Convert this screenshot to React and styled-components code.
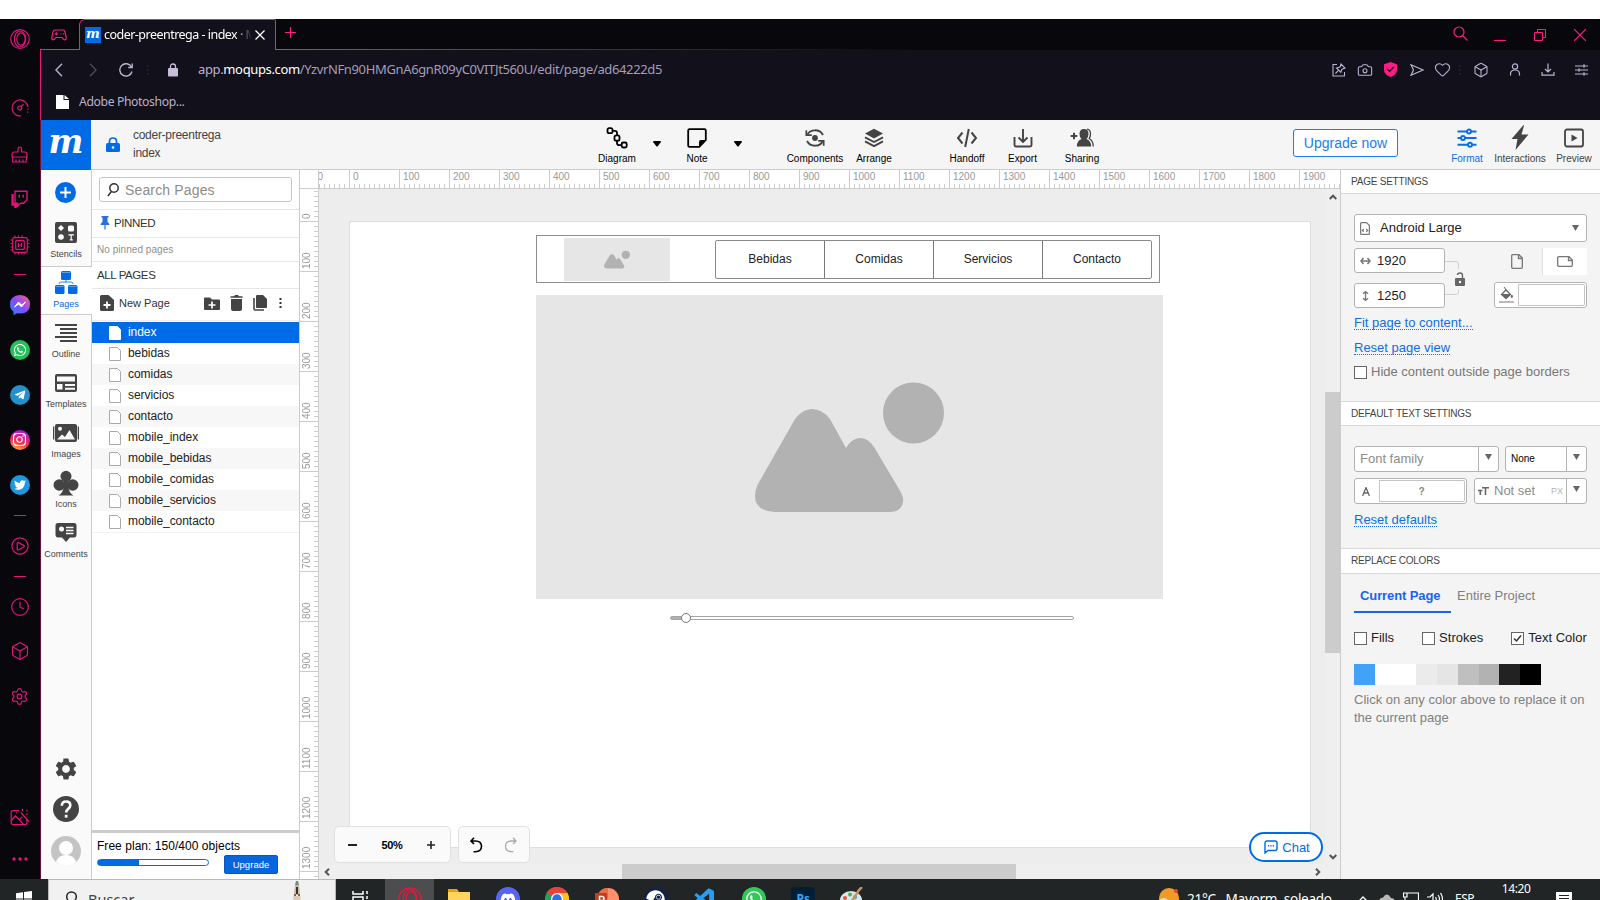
import React from 'react';
import styled, { createGlobalStyle, css } from 'styled-components';
import { Clock, Box, Settings, Camera, Heart } from 'lucide-react';
import { FaWhatsapp, FaTelegramPlane, FaInstagram, FaTwitter, FaDiscord, FaSteam } from 'react-icons/fa';
import { MdSettings } from 'react-icons/md';
import { VscVscode } from 'react-icons/vsc';

const ui = '"Liberation Sans", Arial, sans-serif';
const chrome = '"Noto Sans", "Open Sans", sans-serif';
const blue = '#006be6';
const pink = '#ff1a86';
const line = '#ccc';

const Global = createGlobalStyle`
  * { box-sizing: border-box; }
  body { margin: 0; background: #fff; font-family: ${ui}; overflow: hidden; }
  svg { display: block; flex: none; }
`;

const Screen = styled.div`
  width: 1600px;
  height: 900px;
  padding-top: 19px;
  display: flex;
  flex-direction: column;
  overflow: hidden;
  background: #fff;
`;
const Browser = styled.div`
  height: 860px;
  display: flex;
  background: #08070c;
`;

/* ---------- browser side bar ---------- */
const SideBar = styled.div`
  width: 40px;
  display: flex;
  flex-direction: column;
  color: #e0157a;
`;
const SideSlot = styled.div`
  height: ${(p) => p.$h}px;
  margin-top: ${(p) => p.$gap || 0}px;
  padding-right: 1px;
  flex: none;
  display: flex;
  align-items: center;
  justify-content: center;
`;
const Dash = styled.i`
  width: 12px;
  height: 1px;
  background: currentColor;
`;
const Brand = styled.span`
  width: 20px;
  height: 20px;
  border-radius: 50%;
  display: flex;
  align-items: center;
  justify-content: center;
  color: #fff;
  background: ${(p) => p.$bg};
`;

const Opera = ({ size = 20, color = 'currentColor', w = 1.2 }) => (
  <svg width={size} height={size} viewBox="0 0 20 20" fill="none" stroke={color} strokeWidth={w}>
    <circle cx="10" cy="10" r="9.3" />
    <ellipse cx="10" cy="10" rx="5.6" ry="8" />
    <ellipse cx="11" cy="10" rx="4.2" ry="6.2" />
  </svg>
);
const Gauge = () => (
  <svg width="18" height="18" viewBox="0 0 18 18" fill="none" stroke="currentColor" strokeWidth="1.2">
    <path d="M10 16.9A8 8 0 1 1 17 8" />
    <circle cx="8.7" cy="9" r="2" />
    <path d="M10.2 7.5l2.4-2.3M17 9.5v1.3M16.6 12.5v1.3" />
  </svg>
);
const TwitchIcon = () => (
  <svg width="17" height="18" viewBox="0 0 17 18" fill="none" stroke="currentColor" strokeWidth="1.4">
    <path d="M4 1.2h12v8.6l-3.4 3.4H9.6L6.6 16v-2.8H4z" />
    <path d="M1.6 4v10.6h2.8V17l2.8-2.6" strokeWidth="2.4" />
    <path d="M8.3 4.8v3M12.2 4.8v3" />
  </svg>
);
const PlayRing = () => (
  <svg width="18" height="18" viewBox="0 0 18 18" fill="none" stroke="currentColor" strokeWidth="1.2">
    <circle cx="9" cy="9" r="8.1" />
    <path d="M6.2 6v6.4l1 .6 6-3.2V8.6l-6-3.2z" strokeLinejoin="round" />
  </svg>
);
const MagicImage = () => (
  <svg width="20" height="18" viewBox="0 0 20 18" fill="none" stroke="currentColor" strokeWidth="1.2">
    <path d="M9 2.6H3.2q-2 0-2 2v10q0 2 2 2H15q2 0 2-2V11" />
    <path d="M1.4 12.5L5.5 8l8 8.4M9.5 11.6l2.6-2.8M11 4.5l8 9.5M12.5 .8v2.4M17 1.8v1.8M16 6.2h1.6M6 5h1" />
  </svg>
);

const Main = styled.div`
  flex: 1;
  min-width: 0;
  display: flex;
  flex-direction: column;
`;

/* ---------- tab strip ---------- */
const TabStrip = styled.div`
  height: 31px;
  display: flex;
  align-items: stretch;
  color: ${pink};
  background: linear-gradient(90deg, ${pink} 0, ${pink} 230px, transparent 880px) bottom / 100% 1px no-repeat;
`;
const PadCell = styled.div`
  width: 39px;
  padding-right: 2px;
  display: flex;
  align-items: center;
  justify-content: center;
`;
const Tab = styled.div`
  width: 197px;
  display: flex;
  align-items: center;
  padding: 0 9px 0 5px;
  background: #12101a;
  border: 1px solid ${pink};
  border-bottom: 0;
  border-radius: 6px 2px 0 0;
`;
const Favicon = styled.span`
  width: 16px;
  height: 16px;
  text-align: center;
  background: ${blue};
  color: #fff;
  font: italic bold 13px/13px "DejaVu Serif", serif;
`;
const TabTitle = styled.span`
  margin-left: 3px;
  width: 151px;
  overflow: hidden;
  white-space: nowrap;
  color: #fff;
  font: 12.5px/18px ${chrome};
  letter-spacing: -0.52px;
  mask-image: linear-gradient(90deg, #000 132px, transparent 148px);
`;
const Spacer = styled.div`
  flex: 1;
`;
const StripIcon = styled.div`
  width: ${(p) => p.$w}px;
  display: flex;
  align-items: center;
  justify-content: center;
  padding-bottom: ${(p) => p.$up || 0}px;
`;

/* ---------- address and bookmark bars ---------- */
const NavBar = styled.div`
  height: 39px;
  background: #12101a;
  border-left: 1px solid #e81a80;
  display: flex;
  align-items: center;
  color: #b9b2cf;
`;
const NavIcon = styled.div`
  width: ${(p) => p.$w}px;
  display: flex;
  justify-content: center;
  opacity: ${(p) => (p.$dim ? 0.35 : 1)};
`;
const Address = styled.div`
  margin-left: 5px;
  padding-bottom: 1px;
  font: 13px/18px ${chrome};
  letter-spacing: -0.36px;
  color: #a49dbb;
  white-space: nowrap;
  b { font-weight: 400; color: #fff; }
  span { color: #b9b2cf; }
`;
const Bookmarks = styled.div`
  height: 31px;
  background: #12101a;
  border-left: 1px solid #d81876;
  display: flex;
  align-items: center;
  padding: 0 0 5px 15px;
  gap: 10px;
  font: 12.2px/18px ${chrome};
  letter-spacing: -0.38px;
  color: #b9b2cf;
`;

/* ---------- application frame ---------- */
const AppFrame = styled.div`
  flex: 1;
  min-height: 0;
  display: flex;
  flex-direction: column;
  border-left: 1px solid #6b103f;
  background: #fff;
`;
const TopBar = styled.div`
  height: 50px;
  display: flex;
  background: #f5f5f5;
  border-bottom: 1px solid ${line};
`;
const Logo = styled.div`
  width: 50px;
  height: 50px;
  background: ${blue};
  color: #fff;
  text-align: center;
  font: italic bold 33px/44px "DejaVu Serif", serif;
`;
const ProjectLock = styled.div`
  width: 42px;
  padding-left: 2px;
  display: flex;
  justify-content: center;
  align-items: center;
`;
const ProjectName = styled.div`
  width: 454px;
  padding-top: 6px;
  font-size: 12px;
  line-height: 18px;
  letter-spacing: -0.28px;
  color: #444;
`;
const Tool = styled.div`
  width: ${(p) => p.$w}px;
  margin-left: ${(p) => p.$gap || 0}px;
  flex: none;
  display: flex;
  flex-direction: column;
  align-items: center;
  font-size: 10px;
  line-height: 12px;
  color: ${(p) => p.$color || '#000'};
`;
const ToolIcon = styled.div`
  height: 33px;
  padding-top: 2px;
  display: flex;
  align-items: center;
  color: ${(p) => p.$color || '#444'};
`;
const ToolCaret = styled.div`
  width: ${(p) => p.$w}px;
  display: flex;
  justify-content: center;
  padding-top: 21px;
`;
const UpgradeNow = styled.div`
  width: 105px;
  height: 28px;
  margin: 9px 0 0 177px;
  border: 1px solid #1a7dec;
  border-radius: 3px;
  background: #fff;
  color: #1a7dec;
  font-size: 14px;
  line-height: 27px;
  text-align: center;
  flex: none;
`;
const Body = styled.div`
  flex: 1;
  min-height: 0;
  display: flex;
`;

/* ---------- left navigation ---------- */
const LeftNav = styled.div`
  width: 51px;
  display: flex;
  flex-direction: column;
  align-items: center;
  background: #fafafa;
  box-shadow: inset -1px 0 ${line};
`;
const AddButton = styled.div`
  width: 21px;
  height: 21px;
  margin: 12px 2px 14px 0;
  border-radius: 50%;
  background: ${blue};
  display: flex;
  align-items: center;
  justify-content: center;
`;
const NavItem = styled.div`
  width: 51px;
  height: 50px;
  padding-right: 1px;
  flex: none;
  display: flex;
  flex-direction: column;
  align-items: center;
  color: #444;
  font-size: 9px;
  line-height: 12px;
  &:last-of-type { padding-top: 1px; letter-spacing: -0.1px; }
  ${(p) => p.$active && css`
    height: 49px;
    margin: -1px 0 2px;
    color: ${blue};
    background: #fff;
    border: solid ${line};
    border-width: 1px 0;
  `}
`;
const NavPic = styled.div`
  height: 31px;
  display: flex;
  align-items: center;
  color: ${(p) => p.$color || '#444'};
`;
const NavFoot = styled.div`
  margin-top: auto;
  padding: 0 1px 13px 0;
  display: flex;
  flex-direction: column;
  align-items: center;
  gap: 14px;
  color: #444;
`;

/* ---------- page list ---------- */
const PagesPanel = styled.div`
  width: 207px;
  display: flex;
  flex-direction: column;
  background: #fff;
  color: #333;
`;
const SearchBox = styled.div`
  height: 25px;
  margin: 7px 7px 7px;
  border: 1px solid #c4c4c4;
  border-radius: 3px;
  display: flex;
  align-items: center;
  gap: 6px;
  padding-left: 7px;
  font-size: 14px;
  letter-spacing: 0.15px;
  color: #8c8c8c;
`;
const PanelRow = styled.div`
  height: ${(p) => p.$h}px;
  border-top: 1px solid #e6e6e6;
  padding: 0 0 ${(p) => p.$up || 0}px ${(p) => p.$pl || 5}px;
  display: flex;
  align-items: center;
  gap: ${(p) => p.$gap || 0}px;
  font-size: 11.5px;
  letter-spacing: -0.4px;
  ${(p) => p.$muted && css`
    font-size: 10px;
    letter-spacing: 0.05px;
    color: #8f8f8f;
  `}
`;
const NewPage = styled.span`
  width: 81px;
  margin-left: 5px;
  font-size: 11px;
  letter-spacing: 0;
`;
const ActionIcon = styled.span`
  width: 24px;
  display: flex;
  justify-content: center;
`;
const PageList = styled.div`
  border-top: 1px solid #eee;
  border-bottom: 1px solid #f2f2f2;
  padding-top: 1px;
`;
const PageRow = styled.div`
  height: 21px;
  padding: 0 0 1px 17px;
  display: flex;
  align-items: center;
  gap: 7px;
  font-size: 12px;
  letter-spacing: -0.05px;
  color: ${(p) => (p.$active ? '#fff' : '#222')};
  background: ${(p) => (p.$active ? blue : '#fff')};
  &:nth-child(odd):not(:first-child) { background: #f7f7f7; }
  svg { margin-top: 2px; }
`;
const PlanBox = styled.div`
  margin-top: auto;
  height: 49px;
  border-top: 3px solid ${line};
  padding: 6px 5px 0;
  font-size: 12px;
  line-height: 14px;
  color: #000;
  letter-spacing: 0.04px;
`;
const PlanLine = styled.div`
  display: flex;
  justify-content: space-between;
  padding-right: 16px;
`;
const PlanTrack = styled.div`
  width: 112px;
  height: 7px;
  margin-top: 6px;
  border: 1px solid ${blue};
  border-radius: 4px;
  background: linear-gradient(90deg, ${blue} 41px, #fff 41px);
`;
const PlanButton = styled.div`
  width: 54px;
  height: 19px;
  margin-top: 2px;
  border: 1px solid #0b58b5;
  border-radius: 2px;
  background: #0766dc;
  color: #fff;
  font-size: 9.5px;
  line-height: 18px;
  text-align: center;
`;

/* ---------- rulers and canvas ---------- */
const Stage = styled.div`
  width: 1041px;
  display: grid;
  grid-template: 19px 1fr / 19px 1fr;
  border-left: 1px solid ${line};
  min-height: 0;
`;
const Corner = styled.div`
  border-right: 1px solid ${line};
  border-bottom: 1px solid ${line};
`;
const RulerH = styled.div`
  display: flex;
  overflow: hidden;
  border-bottom: 1px solid ${line};
`;
const RulerV = styled.div`
  overflow: hidden;
  border-right: 1px solid ${line};
`;
const MarkH = styled.div`
  width: 50px;
  flex: none;
  border-left: 1px solid ${line};
  padding-left: 3px;
  color: #999;
  font-size: 10px;
  line-height: 14px;
  background: repeating-linear-gradient(90deg, transparent 0 4px, #ccc 4px 5px) bottom / 100% 4px no-repeat;
  &:first-child { margin-left: -20px; }
`;
const MarkV = styled.div`
  height: 50px;
  border-bottom: 1px solid ${line};
  padding: 0 0 2px 0;
  color: #999;
  font-size: 10px;
  line-height: 13px;
  display: flex;
  background: repeating-linear-gradient(180deg, transparent 0 4px, #ccc 4px 5px) right / 4px 100% no-repeat;
  &:first-child { margin-top: -17px; }
  span { writing-mode: vertical-rl; transform: rotate(180deg); text-align: left; height: 47px; }
`;
const Work = styled.div`
  display: grid;
  grid-template: 1fr 15px / 1fr 15px;
  min-height: 0;
  min-width: 0;
`;
const Viewport = styled.div`
  position: relative;
  overflow: hidden;
  background: #ededed;
`;
const Page = styled.div`
  position: absolute;
  left: 30px;
  top: 32px;
  width: 962px;
  height: 627px;
  background: #fff;
  border: 1px solid #dedede;
`;
/* Stencils sit at free coordinates on the drawn page. */
const Stencil = styled.div`
  position: absolute;
  left: ${(p) => p.$x}px;
  top: ${(p) => p.$y}px;
  width: ${(p) => p.$w}px;
  height: ${(p) => p.$h}px;
`;
const Frame = styled(Stencil)`
  border: 1px solid #8f8f8f;
`;
const Placeholder = styled(Stencil)`
  background: #e6e6e6;
  padding: ${(p) => p.$pad};
`;
const Menu = styled(Stencil)`
  display: flex;
  border: 1px solid #8a8a8a;
  border-radius: 2px;
`;
const MenuItem = styled.div`
  flex: 1;
  text-align: center;
  font-size: 12px;
  line-height: 37px;
  color: #222;
  & + & { border-left: 1px solid #777; }
`;
const SliderTrack = styled(Stencil)`
  border: 1px solid #a5a5a5;
  border-radius: 2px;
  background: linear-gradient(90deg, #b2b2b2 10px, #fff 10px);
`;
const SliderKnob = styled(Stencil)`
  border: 1px solid #777;
  border-radius: 50%;
  background: #fff;
`;
const Scroll = styled.div`
  background: #efefef;
  display: flex;
  flex-direction: ${(p) => (p.$vertical ? 'column' : 'row')};
  align-items: stretch;
`;
const ScrollArrow = styled.div`
  flex: none;
  width: 15px;
  height: 15px;
  display: flex;
  align-items: center;
  justify-content: center;
  svg { transform: rotate(${(p) => p.$turn}deg); }
`;
const ThumbV = styled.div`
  margin-top: 188px;
  margin-bottom: auto;
  height: 261px;
  background: #ccc;
`;
const ThumbH = styled.div`
  margin-left: 288px;
  margin-right: auto;
  width: 394px;
  background: #ccc;
`;
const Floating = styled.div`
  position: absolute;
  display: flex;
  align-items: center;
  justify-content: space-around;
`;
const ZoomBox = styled(Floating)`
  left: 15px;
  top: 637px;
  width: 117px;
  height: 37px;
  padding: 0 3px 0 1px;
  background: #fafafa;
  border: 1px solid #e0e0e0;
  border-radius: 5px;
  font-size: 11px;
  font-weight: bold;
  color: #000;
  letter-spacing: -0.3px;
`;
const HistoryBox = styled(ZoomBox)`
  left: 139px;
  width: 72px;
  padding: 0 2px 0 0;
`;
const ChatButton = styled(Floating)`
  left: 930px;
  top: 643px;
  width: 74px;
  height: 30px;
  justify-content: center;
  gap: 4px;
  padding-left: 2px;
  border: 2px solid ${blue};
  border-radius: 15px;
  background: #fff;
  color: ${blue};
  font-size: 13px;
`;

/* ---------- settings panel ---------- */
const SettingsPanel = styled.div`
  width: 260px;
  flex: none;
  border-left: 1px solid ${line};
  background: #f4f4f4;
  font-size: 13px;
  color: #222;
`;
const SectionHead = styled.div`
  height: ${(p) => p.$h || 25}px;
  border-top: ${(p) => (p.$first ? 0 : 1)}px solid #d8d8d8;
  border-bottom: 1px solid #d8d8d8;
  background: #fff;
  padding-left: 10px;
  font-size: 10px;
  line-height: 23px;
  letter-spacing: -0.22px;
  color: #444;
`;
const Section = styled.div`
  height: ${(p) => p.$h}px;
  padding: 20px 12px 0 13px;
`;
const Line = styled.div`
  display: flex;
  margin-top: ${(p) => p.$gap || 0}px;
`;
const Field = styled.div`
  width: ${(p) => p.$w}px;
  height: ${(p) => p.$h || 26}px;
  margin-left: ${(p) => p.$gap || 0}px;
  flex: none;
  display: flex;
  align-items: center;
  border: 1px solid #b3b3b3;
  border-radius: 3px;
  background: #fff;
  padding: 0 ${(p) => p.$pr || 0}px 0 ${(p) => p.$pl || 0}px;
  color: ${(p) => p.$color || '#222'};
`;
const FieldText = styled.span`
  flex: 1;
  padding: 0 0 1px ${(p) => p.$pl || 0}px;
  white-space: nowrap;
`;
const SmallText = styled(FieldText)`
  font-size: 10px;
  color: #000;
`;
const Unit = styled.span`
  font-size: 9px;
  padding-right: 3px;
  color: #b3b3b3;
`;
const DropCell = styled.span`
  width: 20px;
  align-self: stretch;
  border-left: 1px solid #b3b3b3;
  padding: 7px 1px 0 0;
  display: flex;
  justify-content: center;
`;
const Well = styled.span`
  flex: 1;
  height: 22px;
  border: 1px solid #c4c4c4;
  border-radius: 0 2px 2px 0;
  margin-left: ${(p) => p.$gap}px;
  padding-right: 1px;
  font-size: 10px;
  font-weight: bold;
  line-height: 22px;
  text-align: center;
  color: #888;
`;
const SizeRow = styled.div`
  display: flex;
  margin-top: 6px;
`;
const SizeInputs = styled.div`
  display: flex;
  flex-direction: column;
  gap: 10px;
`;
const LinkCell = styled.div`
  width: 49px;
  height: 60px;
  color: #777;
`;
const RightCol = styled.div`
  display: flex;
  flex-direction: column;
  gap: 7px;
`;
const Orientation = styled.div`
  display: flex;
  height: 27px;
  width: 93px;
`;
const OrientButton = styled.div`
  flex: 1;
  display: flex;
  align-items: center;
  justify-content: center;
  padding-right: ${(p) => (p.$on ? 0 : 2)}px;
  background: ${(p) => (p.$on ? '#fff' : 'none')};
  border-left: 1px solid ${(p) => (p.$on ? '#e0e0e0' : 'transparent')};
`;
const Link = styled.span`
  display: table;
  margin-top: ${(p) => p.$gap}px;
  line-height: 13px;
  height: 14px;
  color: #0b6fe4;
  border-bottom: 1px dotted #0b6fe4;
`;
const Check = styled.span`
  display: flex;
  align-items: center;
  height: 15px;
  margin-left: ${(p) => p.$gap || 0}px;
  gap: 4px;
  white-space: nowrap;
  color: ${(p) => p.$color || '#222'};
`;
const CheckBoxSquare = styled.i`
  width: 13px;
  height: 13px;
  margin-top: 2px;
  border: 1px solid #666;
  background: #fff;
`;
const Tabs = styled.div`
  display: flex;
  margin-top: -8px;
`;
const ModeTab = styled.span`
  height: 27px;
  padding: 2px 10px 0 6px;
  color: #808080;
  ${(p) => p.$on && css`
    font-weight: bold;
    letter-spacing: -0.1px;
    color: #1664ef;
    width: 97px;
    border-bottom: 2px solid #1664ef;
  `}
`;
const Swatches = styled.div`
  display: flex;
  width: 187px;
  height: 21px;
  margin-top: 19px;
`;
const Swatch = styled.i`
  flex: 1;
  background: ${(p) => p.$c};
`;
const Hint = styled.p`
  margin: 6px -4px 0 0;
  line-height: 18px;
  color: #808080;
`;

/* ---------- task bar ---------- */
const TaskBar = styled.div`
  height: 21px;
  overflow: hidden;
  background: #222526;
`;
const TaskInner = styled.div`
  height: 40px;
  display: flex;
  align-items: center;
  font: 14.5px/20px ${chrome};
  color: #fff;
`;
const StartCell = styled.div`
  width: 48px;
  display: flex;
  justify-content: center;
`;
const TaskSearch = styled.div`
  width: 288px;
  height: 40px;
  border: 1px solid #b9b9b9;
  background: #f1f1f1;
  display: flex;
  align-items: center;
  padding: 0 32px 0 16px;
  gap: 11px;
  color: #444;
`;
const TaskCell = styled.div`
  width: 49.2px;
  height: 40px;
  display: flex;
  align-items: center;
  justify-content: center;
  background: ${(p) => (p.$on ? '#4b4d4e' : 'none')};
`;
const Disc = styled.span`
  width: 24px;
  height: 24px;
  border-radius: ${(p) => (p.$square ? '4px' : '50%')};
  background: ${(p) => p.$bg};
  color: ${(p) => p.$fg || '#fff'};
  display: flex;
  align-items: center;
  justify-content: center;
  font: bold 12px/20px ${chrome};
`;
const Weather = styled.div`
  margin-left: 279px;
  width: 195px;
  display: flex;
  align-items: center;
  gap: 7px;
  white-space: pre;
  font-size: 13.6px;
  letter-spacing: -0.3px;
`;
const TrayCell = styled.div`
  width: 24px;
  display: flex;
  justify-content: center;
`;
const TrayText = styled.div`
  width: 41px;
  padding-left: 8px;
  font-size: 12px;
  letter-spacing: -0.5px;
`;
const TimeText = styled.div`
  width: 52px;
  height: 40px;
  padding-left: 4px;
  text-align: center;
  font-size: 12px;
  letter-spacing: -0.4px;
`;

const Caret = () => (
  <svg width="8" height="6" viewBox="0 0 8 6"><path d="M.3 0h7.4v1.200L4.500 5.500h-1L.3 1.200z" fill="#000" /></svg>
);
const Tri = () => (
  <svg width="7" height="6" viewBox="0 0 7 6"><path d="M0 0h7L3.500 6z" fill="#666" /></svg>
);
const Chevron = () => (
  <svg width="8" height="6" viewBox="0 0 8 6" fill="none" stroke="#555" strokeWidth="2"><path d="M.7 5L4 1.7 7.3 5" /></svg>
);
const Mountain = () => (
  <svg width="100%" height="100%" viewBox="0 0 189 130" fill="#b2b2b2">
    <path d="M3 102L40 37Q48 27 57 27Q67 27 75 37L91 66Q97 56 105 56Q113 56 119 65L144 107Q149 115 148 120Q146 130 135 130H20Q0 129 0 114Q0 108 3 102z" />
    <circle cx="158.500" cy="31" r="30.5" />
  </svg>
);
const Sheet = ({ active }) => (
  <svg width="12" height="14" viewBox="0 0 12 14">
    <path d="M.5.5h8l3 3v10H.5z" fill="#fff" stroke={active ? '#fff' : '#aaa'} />
  </svg>
);

const DiagramIcon = () => (
  <svg width="22" height="22" viewBox="0 0 22 22" fill="none" stroke="#000" strokeWidth="1.800">
    <rect x="1.500" y="1.200" width="5" height="5" rx="1.500" /><rect x="8.500" y="8.300" width="5" height="5.400" rx="1.800" /><rect x="15.700" y="15.500" width="5" height="5" rx="1.500" />
    <path d="M6.500 3.800H9q2 0 2 2v2.500M11 13.700V16q0 2.200 2.200 2.200h2.400" />
  </svg>
);
const NoteIcon = () => (
  <svg width="20" height="20" viewBox="0 0 20 20">
    <path d="M2.500 1.200h15q1.300 0 1.300 1.300V12l-6.500 6.800H2.500q-1.300 0-1.300-1.300v-15q0-1.300 1.300-1.300z" fill="none" stroke="#000" strokeWidth="1.800" />
    <path d="M12 19.500V14q0-2 2-2h5.500z" fill="#000" />
  </svg>
);
const ComponentsIcon = () => (
  <svg width="20" height="20" viewBox="0 0 20 20" fill="none" stroke="currentColor" strokeWidth="1.900">
    <circle cx="10" cy="10" r="2.900" fill="currentColor" stroke="none" />
    <path d="M2.500 6.500C5 1.200 14.500.500 18 7M17.500 13.500C15 18.800 5.500 19.500 2 13" />
    <path d="M1.300 2.200v5h5.500M18.700 17.800v-5h-5.500" strokeWidth="1.700" />
  </svg>
);
const LayersIcon = () => (
  <svg width="20" height="20" viewBox="0 0 20 20" fill="none" stroke="currentColor" strokeWidth="1.900">
    <path d="M10 .8l9 4.700-9 5-9-5z" fill="currentColor" stroke="none" />
    <path d="M1 9.300l9 4.700 9-4.700M1 13.300l9 4.900 9-4.900" />
  </svg>
);
const CodeIcon = () => (
  <svg width="22" height="20" viewBox="0 0 22 20" fill="none" stroke="currentColor" strokeWidth="2">
    <path d="M6.500 4.500L2 10l4.500 5.500M15.500 4.500L20 10l-4.500 5.500M12.800 1L9.200 19" />
  </svg>
);
const ExportIcon = () => (
  <svg width="20" height="20" viewBox="0 0 20 20" fill="none" stroke="currentColor" strokeWidth="1.900">
    <path d="M1.500 9v8q0 1.500 1.500 1.500h14q1.500 0 1.500-1.500V9M10 1v13M5.500 9.500L10 14l4.500-4.500" />
  </svg>
);
const ShareIcon = () => (
  <svg width="24" height="20" viewBox="0 0 24 20" fill="currentColor">
    <path d="M14 1q4.500 0 4.500 5 0 3-2 5 4.500 1.500 4.700 7.500H6.800Q7 12.500 11.500 11q-2-2-2-5 0-5 4.500-5z" />
    <path d="M17 1.200q3.500.3 3.500 4.800 0 2.500-1.300 4.500Q23 12.500 23.300 18.500" fill="none" stroke="currentColor" strokeWidth="1.300" />
    <path d="M3 4.800h2v2.200h2.300v2H5v2.200H3V9H.700V7H3z" />
  </svg>
);
const FormatIcon = () => (
  <svg width="20" height="20" viewBox="0 0 20 20" stroke="currentColor" strokeWidth="1.900" fill="#f5f5f5">
    <path d="M.5 3.500h19M.5 10h19M.5 16.800h19" /><circle cx="12" cy="3.500" r="2" /><circle cx="6" cy="10" r="2" /><circle cx="13" cy="16.800" r="2" />
  </svg>
);
const BoltIcon = () => (
  <svg width="18" height="25" viewBox="0 0 18 25" fill="currentColor"><path d="M12.500 0L.5 14h6L4.500 25 17.500 9.500h-7L13 .500z" /></svg>
);
const PreviewIcon = () => (
  <svg width="20" height="20" viewBox="0 0 20 20"><rect x="1" y="1.500" width="18" height="17" rx="2" fill="none" stroke="currentColor" strokeWidth="1.800" /><path d="M7.500 6.500l6 3.500-6 3.500z" fill="currentColor" /></svg>
);

const StencilsIcon = () => (
  <svg width="22" height="21" viewBox="0 0 22 21">
    <rect width="22" height="21" rx="2" fill="#444" />
    <path d="M6 3l3 3-3 3-3-3z" fill="#fff" /><rect x="13" y="3.500" width="6" height="6" rx="1.500" fill="#fff" /><circle cx="6" cy="15" r="2.800" fill="#fff" />
    <path d="M13.500 12.800h5.500M16.200 12.500v5.500M14.800 17.800h3" stroke="#fff" strokeWidth="1.200" />
  </svg>
);
const PagesIcon = () => (
  <svg width="24" height="24" viewBox="0 0 24 24" fill="currentColor">
    <rect x="7" y="0" width="10" height="9" rx="1.500" /><rect x="1" y="14" width="9.500" height="9" rx="1.500" /><rect x="14" y="14" width="9.500" height="9" rx="1.500" />
    <path d="M12 9v2.500M5 13q0-2 2-2h10q2 0 2 2" fill="none" stroke="currentColor" strokeWidth=".8" />
    <path d="M8 1.500h8M2 15.500h7.500M15 15.500h7.500" stroke="#7fb5f3" strokeWidth=".7" />
  </svg>
);
const OutlineIcon = () => (
  <svg width="22" height="18" viewBox="0 0 22 18" fill="#444"><path d="M0 0h22v2H0zM5 4h17v2H5zM5 8h17v2H5zM0 12h22v2H0zM5 16h17v2H5z" /></svg>
);
const TemplatesIcon = () => (
  <svg width="22" height="18" viewBox="0 0 22 18"><rect width="22" height="18" rx="2" fill="#444" /><path d="M2 2.500h18v5H2zM2 10h5.500v5.500H2zM10 10h10v2H10zM10 13.800h10v1.900H10z" fill="#fafafa" /></svg>
);
const ImagesIcon = () => (
  <svg width="26" height="18" viewBox="0 0 26 18" fill="#444"><path d="M0 2.500h1.300v13H0zM24.700 2.500H26v13h-1.300z" /><rect x="2" width="22" height="18" rx="2" /><circle cx="7" cy="4.800" r="2" fill="#fafafa" /><path d="M4 15.500l5-5 3 2.500 4.500-7 5.500 9.500z" fill="#fafafa" /></svg>
);
const ClubIcon = () => (
  <svg width="26" height="26" viewBox="0 0 26 26" fill="#444"><circle cx="13" cy="6.300" r="5.500" /><circle cx="6.300" cy="15" r="5.800" /><circle cx="19.700" cy="15" r="5.800" /><path d="M11 10h4v6q1 7 5.500 9.500h-15Q10 23 11 16z" /></svg>
);
const CommentsIcon = () => (
  <svg width="22" height="20" viewBox="0 0 22 20"><path d="M3 0h16q2.500 0 2.500 2.500v9q0 3-2.500 3h-4L11 19l-4-4.500H3q-2.500 0-2.500-3v-9Q.500 0 3 0z" fill="#444" /><circle cx="6.500" cy="6" r="2.500" fill="#fafafa" /><path d="M11 4.500h7.500M11 7.500h7.500M11 10.500h7.500" stroke="#fafafa" strokeWidth="1.400" /></svg>
);
const Avatar = () => (
  <svg width="30" height="30" viewBox="0 0 30 30"><circle cx="15" cy="15" r="15" fill="#c4c4c4" /><circle cx="15" cy="12" r="7" fill="#fff" /><path d="M5 26q2-7 10-7t10 7q-4 4-10 4T5 26z" fill="#fff" /></svg>
);
const HelpIcon = () => (
  <svg width="26" height="26" viewBox="0 0 26 26"><circle cx="13" cy="13" r="13" fill="#444" /><path d="M8.800 9.800q0-4.300 4.300-4.300 4.200 0 4.200 3.800 0 2-2.100 3.600-2 1.500-2 3.600" fill="none" stroke="#fff" strokeWidth="2.600" /><rect x="11.800" y="18.800" width="2.700" height="2.800" fill="#fff" /></svg>
);
const PinIcon = () => (
  <svg width="10" height="14" viewBox="0 0 10 14" fill="#2a6fdb"><path d="M1.500 0h7v1.400h-1V6Q9.500 7 9.500 9H5.600v4.500H4.400V9H.5q0-2 2-3V1.400h-1z" /></svg>
);
const LockIcon = () => (
  <svg width="14" height="15" viewBox="0 0 14 15"><rect y="6" width="14" height="9" rx="1.500" fill={blue} /><path d="M3.500 7V4.500q0-3.500 3.500-3.500t3.500 3.500V7" fill="none" stroke={blue} strokeWidth="1.700" /><circle cx="7" cy="10.500" r="1.300" fill="#fff" /></svg>
);
const NewPageIcon = () => (
  <svg width="14" height="16" viewBox="0 0 14 16"><path d="M1.500 0h7L14 5v9.500q0 1.500-1.500 1.500h-11Q0 16 0 14.500v-13Q0 0 1.500 0z" fill="#444" /><path d="M7 6.500v7M3.500 10h7" stroke="#fff" strokeWidth="1.800" /></svg>
);
const NewFolder = () => (
  <svg width="16" height="14" viewBox="0 0 16 12"><path d="M0 1.500Q0 .500 1 .500h5L8 2.500h7q1 0 1 1V12q0 1-1 1H1q-1 0-1-1z" fill="#444" /><path d="M8 4.500v7M4.500 8h7" stroke="#fff" strokeWidth="1.700" /></svg>
);
const Trash = () => (
  <svg width="13" height="16" viewBox="0 0 13 16" fill="#444"><path d="M.5 1.200H4L5 0h3l1 1.200h3.500v1.600H.5zM1 4h11v10q0 2-2 2H3q-2 0-2-2z" /></svg>
);
const CopyIcon = () => (
  <svg width="14" height="16" viewBox="0 0 14 16"><path d="M4 0h6l4 4v8q0 1-1 1H4q-1 0-1-1V1q0-1 1-1z" fill="#444" /><path d="M1 3v11q0 1 1 1h9" fill="none" stroke="#444" strokeWidth="1.600" /></svg>
);

const ShieldIcon = () => (
  <svg width="13" height="15" viewBox="0 0 13 15"><path d="M6.500 0L13 2.200V8q0 4.500-6.500 7Q0 12.500 0 8V2.200z" fill={pink} /><path d="M3.300 7l2.300 2.300L9.800 5" fill="none" stroke="#12101a" strokeWidth="1.500" /></svg>
);
const PinEdit = () => (
  <svg width="14" height="14" viewBox="0 0 14 14" fill="none" stroke="currentColor" strokeWidth="1.100"><path d="M5 1.500H1v11.500h11.500V9M9 1l4 4-3 1.200-1.200 3L4.500 5 8 4zM6.600 7.200L3.500 10.500" /></svg>
);
const UserIcon = () => (
  <svg width="12" height="13" viewBox="0 0 12 13" fill="none" stroke="currentColor" strokeWidth="1.200"><circle cx="6" cy="3.500" r="2.600" /><path d="M1.500 12.500V11q0-4 4.500-4t4.500 4v1.500" /></svg>
);
const DownIcon = () => (
  <svg width="14" height="13" viewBox="0 0 14 13" fill="none" stroke="currentColor" strokeWidth="1.200"><path d="M1 9v3.200h12V9M7 .5v8.300M4 6l3 3 3-3" /></svg>
);
const TuneIcon = () => (
  <svg width="13" height="12" viewBox="0 0 13 12" fill="none" stroke="currentColor" strokeWidth="1.200"><path d="M0 2h13M0 6h13M0 10h13M9 .2v3.600M4 4.200v3.600M9 8.200v3.600" /></svg>
);
const DotsIcon = () => (
  <svg width="2" height="10" viewBox="0 0 2 10" fill="#2c2938"><path d="M0 0h1.500v1.500H0zM0 4h1.500v1.500H0zM0 8h1.500v1.500H0z" /></svg>
);

const pages = ['index', 'bebidas', 'comidas', 'servicios', 'contacto', 'mobile_index', 'mobile_bebidas', 'mobile_comidas', 'mobile_servicios', 'mobile_contacto'];
const hMarks = Array.from({ length: 21 }, (_, i) => (i - 1) * 100);
const vMarks = Array.from({ length: 15 }, (_, i) => i * 100);
const palette = ['#42a1f9', '#fff', '#fff', '#ebebeb', '#e5e5e5', '#bfbfbf', '#b2b2b2', '#222', '#000'];

const BrowserSide = () => (
  <SideBar>
    <SideSlot $h={40}><Opera /></SideSlot>
    <SideSlot $h={46} $gap={26}><Gauge /></SideSlot>
    <SideSlot $h={46}>
      <svg width="17" height="17" viewBox="0 0 17 17" fill="none" stroke="currentColor" strokeWidth="1.2"><path d="M1 11V8.500q0-2.500 2.500-2.500H7V3.500Q7 1 8.800 1t1.800 2.500V6h3q2.400 0 2.400 2.500V11H1zM1.800 11L1.500 16h13.500l.7-5M5 16v-2.500M8.500 16v-2.500M12 16v-2.500" /></svg>
    </SideSlot>
    <SideSlot $h={44}><TwitchIcon /></SideSlot>
    <SideSlot $h={48}>
      <svg width="20" height="20" viewBox="0 0 20 20" fill="none" stroke="currentColor" strokeWidth="1.2"><rect x="2.700" y="2.700" width="14.600" height="14.600" rx="1.500" /><rect x="5.700" y="5.700" width="8.600" height="8.600" rx="1" /><path d="M8.500 8v4M11.500 8v4M8.500 10h3M5 .5v2M8.500.5v2M12 .5v2M5 17.500v2M8.500 17.500v2M12 17.500v2M15 17.500v2M.5 5h2M.5 8.500h2M.5 12h2M.5 15h2M17.500 5h2M17.500 8.500h2M17.500 12h2" /></svg>
    </SideSlot>
    <SideSlot $h={10}><Dash /></SideSlot>
    <SideSlot $h={52}>
      <svg width="20" height="20" viewBox="0 0 20 20">
        <defs><linearGradient id="ms" x1="0" y1="1" x2="1" y2="0"><stop offset="0" stopColor="#1a8cff" /><stop offset=".5" stopColor="#8a4bff" /><stop offset="1" stopColor="#ff5f7a" /></linearGradient></defs>
        <path d="M10 0q10 .5 10 9.500T10 18.500l-3-.3L3.500 20v-3.500Q0 14 0 9.500 0 .5 10 0z" fill="url(#ms)" />
        <path d="M4.500 12L8.500 7l3 3 4-3-4 5-3-3z" fill="#fff" stroke="#fff" />
      </svg>
    </SideSlot>
    <SideSlot $h={37}><Brand $bg="#23c05a"><FaWhatsapp size={14} /></Brand></SideSlot>
    <SideSlot $h={53}><Brand $bg="#2490cc"><FaTelegramPlane size={12} /></Brand></SideSlot>
    <SideSlot $h={37}><Brand $bg="linear-gradient(20deg, #fdb931 5%, #f1314a 40%, #d61ea0 65%, #6a2be8)"><FaInstagram size={15} /></Brand></SideSlot>
    <SideSlot $h={53}><Brand $bg="#1d97e0"><FaTwitter size={12} /></Brand></SideSlot>
    <SideSlot $h={8}><Dash /></SideSlot>
    <SideSlot $h={53}><PlayRing /></SideSlot>
    <SideSlot $h={8}><Dash /></SideSlot>
    <SideSlot $h={53}><Clock size={20} strokeWidth={1.4} /></SideSlot>
    <SideSlot $h={36}><Box size={20} strokeWidth={1.4} /></SideSlot>
    <SideSlot $h={54}><Settings size={19} strokeWidth={1.5} /></SideSlot>
    <SideSlot $h={42} $gap={73}><MagicImage /></SideSlot>
    <SideSlot $h={41}>
      <svg width="16" height="4" viewBox="0 0 16 4" fill="currentColor"><circle cx="2" cy="2" r="1.700" /><circle cx="8" cy="2" r="1.700" /><circle cx="14" cy="2" r="1.700" /></svg>
    </SideSlot>
  </SideBar>
);

const Header = () => (
  <>
    <TabStrip>
      <PadCell>
        <svg width="16" height="12" viewBox="0 0 16 12" fill="none" stroke="currentColor" strokeWidth="1.200"><path d="M4 1h8q1.500 0 2 2l1.200 5q.3 2.800-1.500 2.800-1.200 0-2.700-2.300h-6Q3.500 10.800 2.300 10.800.500 10.800.800 8L2 3q.500-2 2-2z" /><path d="M3.800 4.800h3M5.300 3.300v3M9.500 4.800h1M12 4.800h1" /></svg>
      </PadCell>
      <Tab>
        <Favicon>m</Favicon>
        <TabTitle>coder-preentrega - index · M</TabTitle>
        <svg width="10" height="10" viewBox="0 0 10 10" stroke="#fff" strokeWidth="1.300"><path d="M.5.5l9 9M9.500.5l-9 9" /></svg>
      </Tab>
      <StripIcon $w={28} $up={5}><svg width="11" height="11" viewBox="0 0 11 11" stroke={pink} strokeWidth="1.200"><path d="M5.500 0v11M0 5.500h11" /></svg></StripIcon>
      <Spacer />
      <StripIcon $w={40} $up={2}><svg width="15" height="15" viewBox="0 0 15 15" fill="none" stroke={pink} strokeWidth="1.200"><circle cx="6" cy="6" r="5" /><path d="M9.500 9.500l5 5" /></svg></StripIcon>
      <StripIcon $w={40}><svg width="12" height="12" viewBox="0 0 12 12" stroke={pink}><path d="M0 11.500h12" /></svg></StripIcon>
      <StripIcon $w={40}><svg width="12" height="12" viewBox="0 0 12 12" fill="none" stroke={pink}><path d="M.5 3.500h8v8h-8zM3.500 3.500v-3h8v8h-3" /></svg></StripIcon>
      <StripIcon $w={40}><svg width="12" height="12" viewBox="0 0 12 12" stroke={pink} strokeWidth="1.200"><path d="M0 0l12 12M12 0L0 12" /></svg></StripIcon>
    </TabStrip>
    <NavBar>
      <NavIcon $w={35}><svg width="8" height="14" viewBox="0 0 8 14" fill="none" stroke="currentColor" strokeWidth="1.400"><path d="M7 .700L1 7l6 6.300" /></svg></NavIcon>
      <NavIcon $w={33} $dim><svg width="8" height="14" viewBox="0 0 8 14" fill="none" stroke="currentColor" strokeWidth="1.400"><path d="M1 .700L7 7l-6 6.300" /></svg></NavIcon>
      <NavIcon $w={33}><svg width="14" height="14" viewBox="0 0 14 14" fill="none" stroke="currentColor" strokeWidth="1.400"><path d="M12.500 4A6.200 6.200 0 1 0 13 8.500M13.200.5V4.500H9.200" /></svg></NavIcon>
      <NavIcon $w={11}><DotsIcon /></NavIcon>
      <NavIcon $w={40}><svg width="10" height="14" viewBox="0 0 10 14"><rect y="5" width="10" height="8.500" rx="1" fill="#c5bdd9" /><path d="M2.500 5.500V3.500q0-2.500 2.500-2.500t2.500 2.500v2" fill="none" stroke="#c5bdd9" strokeWidth="1.300" /></svg></NavIcon>
      <Address><span>app.</span><b>moqups.com</b>/YzvrNFn90HMGnA6gnR09yC0VITJt560U/edit/page/ad64222d5</Address>
      <Spacer />
      <NavIcon $w={26}><PinEdit /></NavIcon>
      <NavIcon $w={26}><Camera size={16} strokeWidth={1.6} /></NavIcon>
      <NavIcon $w={25}><ShieldIcon /></NavIcon>
      <NavIcon $w={27}><svg width="14" height="12" viewBox="0 0 14 12" fill="none" stroke="currentColor" strokeWidth="1.200"><path d="M1 .800L13 6 1 11.200 3.500 6z" /></svg></NavIcon>
      <NavIcon $w={25}><Heart size={17} strokeWidth={1.500} /></NavIcon>
      <NavIcon $w={10}><DotsIcon /></NavIcon>
      <NavIcon $w={32}><Box size={16} strokeWidth={1.600} /></NavIcon>
      <NavIcon $w={36}><UserIcon /></NavIcon>
      <NavIcon $w={29}><DownIcon /></NavIcon>
      <NavIcon $w={38}><TuneIcon /></NavIcon>
    </NavBar>
    <Bookmarks>
      <svg width="13" height="14" viewBox="0 0 13 14" fill="#fff"><path d="M0 0h7.500v5H13v9H0zM8.500 0L13 4H8.500z" /></svg>
      Adobe Photoshop...
    </Bookmarks>
  </>
);

const AppTop = () => (
  <TopBar>
    <Logo>m</Logo>
    <ProjectLock><LockIcon /></ProjectLock>
    <ProjectName>coder-preentrega<br />index</ProjectName>
    <Tool $w={60}><ToolIcon><DiagramIcon /></ToolIcon>Diagram</Tool>
    <ToolCaret $w={20}><Caret /></ToolCaret>
    <Tool $w={60}><ToolIcon><NoteIcon /></ToolIcon>Note</Tool>
    <ToolCaret $w={22}><Caret /></ToolCaret>
    <Tool $w={66} $gap={33}><ToolIcon><ComponentsIcon /></ToolIcon>Components</Tool>
    <Tool $w={52}><ToolIcon><LayersIcon /></ToolIcon>Arrange</Tool>
    <Tool $w={60} $gap={37}><ToolIcon><CodeIcon /></ToolIcon>Handoff</Tool>
    <Tool $w={51}><ToolIcon><ExportIcon /></ToolIcon>Export</Tool>
    <Tool $w={68}><ToolIcon><ShareIcon /></ToolIcon>Sharing</Tool>
    <UpgradeNow>Upgrade now</UpgradeNow>
    <Tool $w={48} $gap={45} $color="#0b6fe4"><ToolIcon $color="#0b6fe4"><FormatIcon /></ToolIcon>Format</Tool>
    <Tool $w={58} $color="#444"><ToolIcon><BoltIcon /></ToolIcon>Interactions</Tool>
    <Tool $w={50} $color="#444"><ToolIcon><PreviewIcon /></ToolIcon>Preview</Tool>
  </TopBar>
);

const AppNav = () => (
  <LeftNav>
    <AddButton><svg width="11" height="11" viewBox="0 0 11 11" stroke="#fff" strokeWidth="2"><path d="M5.500 0v11M0 5.500h11" /></svg></AddButton>
    <NavItem><NavPic><StencilsIcon /></NavPic>Stencils</NavItem>
    <NavItem $active><NavPic $color={blue}><PagesIcon /></NavPic>Pages</NavItem>
    <NavItem><NavPic><OutlineIcon /></NavPic>Outline</NavItem>
    <NavItem><NavPic><TemplatesIcon /></NavPic>Templates</NavItem>
    <NavItem><NavPic><ImagesIcon /></NavPic>Images</NavItem>
    <NavItem><NavPic><ClubIcon /></NavPic>Icons</NavItem>
    <NavItem><NavPic><CommentsIcon /></NavPic>Comments</NavItem>
    <NavFoot><MdSettings size={26} /><HelpIcon /><Avatar /></NavFoot>
  </LeftNav>
);

const AppPages = () => (
  <PagesPanel>
    <SearchBox>
      <svg width="12" height="14" viewBox="0 0 12 14" fill="none" stroke="#333" strokeWidth="1.500"><circle cx="7" cy="5" r="4.200" /><path d="M4.500 8.500L.800 13" /></svg>
      Search Pages
    </SearchBox>
    <PanelRow $h={28} $pl={8} $gap={4} $up={2}><PinIcon />PINNED</PanelRow>
    <PanelRow $h={24} $muted>No pinned pages</PanelRow>
    <PanelRow $h={27}>ALL PAGES</PanelRow>
    <PanelRow $h={32} $pl={8} $up={3}>
      <NewPageIcon />
      <NewPage>New Page</NewPage>
      <ActionIcon><NewFolder /></ActionIcon>
      <ActionIcon><Trash /></ActionIcon>
      <ActionIcon><CopyIcon /></ActionIcon>
      <svg width="20" height="12" viewBox="0 0 20 12" fill="#333"><path d="M7.500 1h2v2h-2zM7.500 5h2v2h-2zM7.500 9h2v2h-2z" /></svg>
    </PanelRow>
    <PageList>
      {pages.map((name, i) => (
        <PageRow key={name} $active={i === 0}><Sheet active={i === 0} />{name}</PageRow>
      ))}
    </PageList>
    <PlanBox>
      Free plan: 150/400 objects
      <PlanLine><PlanTrack /><PlanButton>Upgrade</PlanButton></PlanLine>
    </PlanBox>
  </PagesPanel>
);

const Canvas = () => (
  <Stage>
    <Corner />
    <RulerH>{hMarks.map((m) => <MarkH key={m}>{m}</MarkH>)}</RulerH>
    <RulerV>{vMarks.map((m) => <MarkV key={m}><span>{m}</span></MarkV>)}</RulerV>
    <Work>
      <Viewport>
        <Page>
          <Frame $x={186} $y={13} $w={624} $h={48} />
          <Placeholder $x={214} $y={16} $w={106} $h={43} $pad="12px 40px"><Mountain /></Placeholder>
          <Menu $x={365} $y={18} $w={437} $h={39}>
            <MenuItem>Bebidas</MenuItem><MenuItem>Comidas</MenuItem><MenuItem>Servicios</MenuItem><MenuItem>Contacto</MenuItem>
          </Menu>
          <Placeholder $x={186} $y={73} $w={627} $h={304} $pad="87px 219px"><Mountain /></Placeholder>
          <SliderTrack $x={320} $y={394} $w={404} $h={4} />
          <SliderKnob $x={331} $y={391} $w={10} $h={10} />
        </Page>
        <ZoomBox>
          <svg width="9" height="2" viewBox="0 0 9 2"><path d="M0 0h9v2H0z" fill="#222" /></svg>
          50%
          <svg width="8" height="8" viewBox="0 0 8 8" stroke="#222" strokeWidth="1.600"><path d="M4 0v8M0 4h8" /></svg>
        </ZoomBox>
        <HistoryBox>
          <svg width="13" height="16" viewBox="0 0 13 16" fill="none" stroke="#000" strokeWidth="1.600"><path d="M1 4h4.500q6 0 6 5.300T5.500 14.700H3.500M4 .800L1 4l3 3" /></svg>
          <svg width="13" height="16" viewBox="0 0 13 16" fill="none" stroke="#aaa" strokeWidth="1.300"><path d="M12 4H7.500q-6 0-6 5.300t6 5.400h2M9 .800L12 4 9 7" /></svg>
        </HistoryBox>
        <ChatButton>
          <svg width="14" height="14" viewBox="0 0 14 14" fill="none" stroke="currentColor" strokeWidth="1.400"><path d="M3 1h8q2 0 2 2v5.500q0 2-2 2H4L1 13V3q0-2 2-2z" /><path d="M4 5.800h1.200M6.400 5.800h1.200M8.800 5.800H10" /></svg>
          Chat
        </ChatButton>
      </Viewport>
      <Scroll $vertical>
        <ScrollArrow $turn={0}><Chevron /></ScrollArrow><ThumbV /><ScrollArrow $turn={180}><Chevron /></ScrollArrow>
      </Scroll>
      <Scroll>
        <ScrollArrow $turn={-90}><Chevron /></ScrollArrow><ThumbH /><ScrollArrow $turn={90}><Chevron /></ScrollArrow>
      </Scroll>
      <Scroll />
    </Work>
  </Stage>
);

const Panel = () => (
  <SettingsPanel>
    <SectionHead $first $h={24}>PAGE SETTINGS</SectionHead>
    <Section $h={207}>
      <Field $w={233} $h={28} $pl={5} $pr={7}>
        <svg width="10" height="13" viewBox="0 0 10 13" fill="none" stroke="#777" strokeWidth="1.200"><path d="M1.500.600H6.500L9.400 3.500v8q0 .9-.9.900h-7q-.9 0-.9-.9v-10q0-.9.900-.9z" /><path d="M3.800 7L2.300 8.500l1.500 1.300M6.200 7l1.500 1.500-1.500 1.300" /></svg>
        <FieldText $pl={10}>Android Large</FieldText><Tri />
      </Field>
      <SizeRow>
        <SizeInputs>
          <Field $w={91} $h={25} $pl={5}><svg width="11" height="8" viewBox="0 0 11 8" fill="none" stroke="#777" strokeWidth="1.500"><path d="M1 4h9M3.500 1L1 4l2.500 3M7.500 1L10 4 7.500 7" /></svg><FieldText $pl={6}>1920</FieldText></Field>
          <Field $w={91} $h={25} $pl={7}><svg width="7" height="12" viewBox="0 0 8 12" fill="none" stroke="#777" strokeWidth="1.500"><path d="M4 1v10M1 3.500L4 1l3 2.500M1 8.500L4 11l3-2.500" /></svg><FieldText $pl={8}>1250</FieldText></Field>
        </SizeInputs>
        <LinkCell>
          <svg width="24" height="60" viewBox="0 0 24 60" fill="none"><path d="M0 13.500h11q2.500 0 2.500 2.500v5M0 46.500h11q2.500 0 2.500-2.500v-2.500" stroke="#d0d0d0" /><rect x="10" y="30" width="10" height="8" rx="1" fill="#666" /><circle cx="15" cy="34" r="1.200" fill="#fff" /><path d="M12.500 27q0-2 2.500-2t2.500 2.500V30" stroke="#666" strokeWidth="1.400" /></svg>
        </LinkCell>
        <RightCol>
          <Orientation>
            <OrientButton><svg width="12" height="15" viewBox="0 0 12 15" fill="none" stroke="#777" strokeWidth="1.300"><path d="M1.800.700H8l3.300 3.300v9.200q0 1.100-1.100 1.100H1.800q-1.100 0-1.100-1.100V1.800Q.700.700 1.800.700zM7.500.700v3.800h3.800" /></svg></OrientButton>
            <OrientButton $on><svg width="16" height="11" viewBox="0 0 16 11" fill="none" stroke="#777" strokeWidth="1.300"><path d="M1.800.700H12L15.300 4v5.200q0 1.100-1.100 1.100H1.800Q.700 10.300.700 9.200V1.800Q.700.700 1.800.700zM11.500.700v3.800h3.800" /></svg></OrientButton>
          </Orientation>
          <Field $w={93} $h={26} $pl={4} $pr={1}>
            <svg width="16" height="16" viewBox="0 0 16 16"><path d="M2.500 7.500L7 3l4.500 4.500L7 11.500z" fill="none" stroke="#666" strokeWidth="1.300" /><path d="M2.500 7.500h9L7 11.500zM5 0l3 4M12.800 8q1.500 2 .2 2.800-1.700-.3-.2-2.800z" fill="#666" stroke="#666" /><path d="M0 15h15" stroke="#c2b8b8" strokeWidth="2" /></svg>
            <Well $gap={3} />
          </Field>
        </RightCol>
      </SizeRow>
      <Link $gap={8}>Fit page to content...</Link>
      <Link $gap={11}>Reset page view</Link>
      <Line $gap={9}><Check $color="#777"><CheckBoxSquare />Hide content outside page borders</Check></Line>
    </Section>
    <SectionHead>DEFAULT TEXT SETTINGS</SectionHead>
    <Section $h={122}>
      <Line>
        <Field $w={145} $pl={5} $color="#8c8c8c"><FieldText>Font family</FieldText><DropCell><Tri /></DropCell></Field>
        <Field $w={82} $gap={6} $pl={5}><SmallText>None</SmallText><DropCell><Tri /></DropCell></Field>
      </Line>
      <Line $gap={6}>
        <Field $w={113} $pl={7} $pr={1} $color="#666">
          <svg width="8" height="9" viewBox="0 0 8 9" fill="none" stroke="#666" strokeWidth="1.300"><path d="M.600 9L4 .500 7.400 9M1.800 6h4.400" /></svg>
          <Well $gap={9}>?</Well>
        </Field>
        <Field $w={113} $gap={7} $pl={3} $color="#8c8c8c">
          <svg width="11" height="8" viewBox="0 0 11 8" fill="none" stroke="#666" strokeWidth="1.600"><path d="M4 .800h7M7.500.800V8M0 3.500h4.500M2.300 3.500V8" /></svg>
          <FieldText $pl={5}>Not set</FieldText><Unit>PX</Unit><DropCell><Tri /></DropCell>
        </Field>
      </Line>
      <Link $gap={9}>Reset defaults</Link>
    </Section>
    <SectionHead $h={26}>REPLACE COLORS</SectionHead>
    <Section>
      <Tabs><ModeTab $on>Current Page</ModeTab><ModeTab>Entire Project</ModeTab></Tabs>
      <Line $gap={17}>
        <Check><CheckBoxSquare />Fills</Check>
        <Check $gap={28}><CheckBoxSquare />Strokes</Check>
        <Check $gap={28}>
          <CheckBoxSquare as="svg" width="13" height="13" viewBox="0 0 11 11" fill="none" stroke="#333" strokeWidth="1.500"><path d="M2 5.500L4.500 8 9 2.500" /></CheckBoxSquare>
          Text Color
        </Check>
      </Line>
      <Swatches>{palette.map((c, i) => <Swatch key={i} $c={c} />)}</Swatches>
      <Hint>Click on any color above to replace it on the current page</Hint>
    </Section>
  </SettingsPanel>
);

const Tasks = () => (
  <TaskBar>
    <TaskInner>
      <StartCell><svg width="16" height="16" viewBox="0 0 16 16" fill="#fff"><path d="M0 2.200L7 1.200V7.500H0zM8 1L16 0v7.500H8zM0 8.500h7v6.300L0 13.800zM8 8.500h8V16L8 15z" /></svg></StartCell>
      <TaskSearch>
        <svg width="12" height="16" viewBox="0 0 12 16" fill="none" stroke="#222" strokeWidth="1.500"><circle cx="6.500" cy="5.700" r="4.800" /><path d="M4 10L0 15" /></svg>
        Buscar
        <Spacer />
        <svg width="12" height="36" viewBox="0 0 12 36"><path d="M5 0h2l1 4H4z" fill="#6b8f7d" /><path d="M4 4h4l1 10H3z" fill="#c9b7a8" /><path d="M5 6h2v7H5z" fill="#333" /><path d="M3 13h2v2H3zM7 13h2v2H7z" fill="#86603f" /><path d="M2.500 15h7l1.500 21H1z" fill="#dccbb8" /></svg>
      </TaskSearch>
      <TaskCell><svg width="17" height="16" viewBox="0 0 17 16" fill="none" stroke="#fff" strokeWidth="1.500"><path d="M1 0v3h10V0M1 6h10v6H1zM15 0v3M15 5v3M15 10v6" /></svg></TaskCell>
      <TaskCell $on><Opera size={24} color="#e8173f" w={1.100} /></TaskCell>
      <TaskCell><svg width="22" height="20" viewBox="0 0 22 20"><path d="M0 0h9l2 3H0z" fill="#e8a200" /><path d="M0 3h22v17H0z" fill="#ffd45c" /></svg></TaskCell>
      <TaskCell><Disc $bg="#5865f2"><FaDiscord size={16} /></Disc></TaskCell>
      <TaskCell><svg width="24" height="24" viewBox="0 0 24 24"><circle cx="12" cy="12" r="12" fill="#1ea362" /><path d="M12 12L1.600 6A12 12 0 0 1 22.400 6z" fill="#ea4335" /><path d="M12 6h10.400A12 12 0 0 1 12 24z" fill="#fbc116" /><circle cx="12" cy="12" r="6" fill="#fff" /><circle cx="12" cy="12" r="4.700" fill="#2f6fe8" /></svg></TaskCell>
      <TaskCell><svg width="24" height="22" viewBox="0 0 24 22"><circle cx="13" cy="11" r="11" fill="#ff8f6b" /><path d="M13 0v11H2A11 11 0 0 1 13 0z" fill="#ed6c47" /><rect y="5" width="12" height="12" fill="#c43e1c" /><path d="M4.500 15V8.500H7q2 0 2 2t-2 2H4.500" fill="none" stroke="#fff" strokeWidth="1.500" /></svg></TaskCell>
      <TaskCell><Disc $bg="#14224a"><FaSteam size={19} /></Disc></TaskCell>
      <TaskCell><VscVscode size={24} color="#2a9df0" /></TaskCell>
      <TaskCell><Disc $bg="#32c759"><FaWhatsapp size={18} /></Disc></TaskCell>
      <TaskCell><Disc $square $bg="#001e36" $fg="#31a8ff">Ps</Disc></TaskCell>
      <TaskCell><svg width="24" height="24" viewBox="0 0 24 24"><ellipse cx="11" cy="13" rx="11" ry="9" fill="#d8e6ee" /><circle cx="5" cy="11" r="2" fill="#e4543a" /><circle cx="10" cy="7.500" r="2" fill="#4caf50" /><circle cx="15" cy="10" r="2" fill="#2d8fe0" /><path d="M22 0l-3 3-7 11" stroke="#c4955a" strokeWidth="2.500" fill="none" /></svg></TaskCell>
      <Weather>
        <svg width="24" height="24" viewBox="0 0 24 24"><circle cx="13" cy="11" r="10" fill="#f29b24" /><circle cx="20" cy="4" r="2" fill="#e8452c" /><path d="M3 13q5-4 9 0 5 0 5 5v4H0v-4q0-4 3-5z" fill="#d8dde3" /></svg>
        {'21°C   Mayorm. soleado'}
      </Weather>
      <TrayCell><svg width="10" height="6" viewBox="0 0 10 6" fill="none" stroke="#fff" strokeWidth="1.300"><path d="M.5 5.500L5 1l4.500 4.500" /></svg></TrayCell>
      <TrayCell><svg width="16" height="11" viewBox="0 0 16 11" fill="#b8b8b8"><path d="M4 3.500q4-6 8 .5 4 0 4 4 0 3-3 3H3q-3 0-3-3.500T4 3.500z" /></svg></TrayCell>
      <TrayCell><svg width="16" height="14" viewBox="0 0 16 14" fill="none" stroke="#fff" strokeWidth="1.200"><path d="M4 1h11.500v9H4M.500 1h3.500v4H.500zM2 5v8M8 13h5" /></svg></TrayCell>
      <TrayCell><svg width="16" height="14" viewBox="0 0 16 14" fill="none" stroke="#fff" strokeWidth="1.200"><path d="M0 5h3l3-3v10L3 9H0M8.500 5q1.500 2 0 4M11 3q3 4 0 8M13.500 1q4 6 0 12" /></svg></TrayCell>
      <TrayText>ESP</TrayText>
      <TimeText>14:20</TimeText>
      <TaskCell><svg width="17" height="15" viewBox="0 0 17 15"><path d="M0 0h16v12H6l-3 3v-3H0z" fill="#fff" /><path d="M3 3.500h10M3 6.500h10" stroke="#222" /></svg></TaskCell>
    </TaskInner>
  </TaskBar>
);

export default function App() {
  return (
    <Screen>
      <Global />
      <Browser>
        <BrowserSide />
        <Main>
          <Header />
          <AppFrame>
            <AppTop />
            <Body>
              <AppNav />
              <AppPages />
              <Canvas />
              <Panel />
            </Body>
          </AppFrame>
        </Main>
      </Browser>
      <Tasks />
    </Screen>
  );
}
